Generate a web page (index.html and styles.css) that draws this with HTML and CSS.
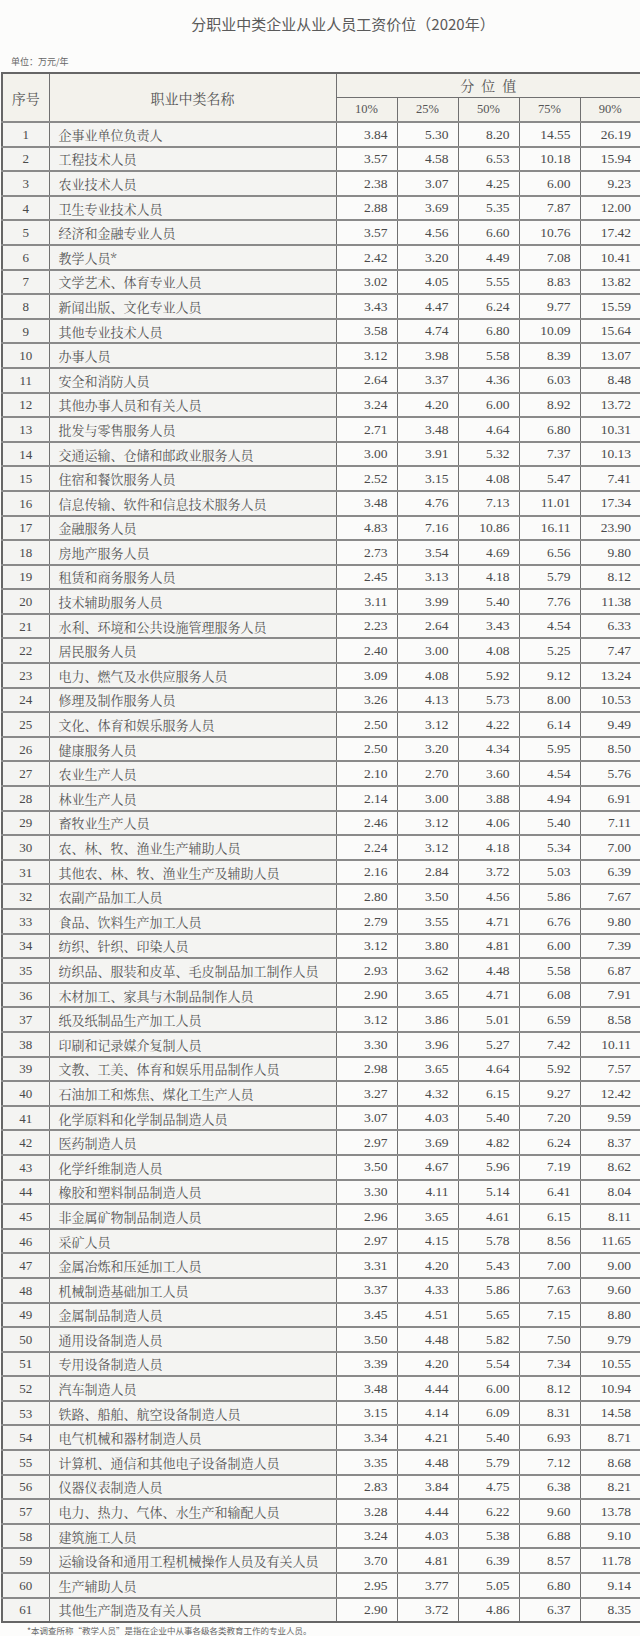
FILE: index.html
```html
<!DOCTYPE html>
<html lang="zh-CN">
<head>
<meta charset="utf-8">
<title>分职业中类企业从业人员工资价位（2020年）</title>
<link rel="stylesheet" href="styles.css">
</head>
<body>
<div class="page">
<h1 class="title">分职业中类企业从业人员工资价位（2020年）</h1>
<div class="unit">单位：万元/年</div>
<table class="wage">
<colgroup>
<col class="c-no"><col class="c-name"><col class="c-v"><col class="c-v"><col class="c-v"><col class="c-v"><col class="c-v">
</colgroup>
<thead>
<tr class="h1"><th rowspan="2" class="hd-big">序号</th><th rowspan="2" class="hd-big">职业中类名称</th><th colspan="5" class="hd-group">分位值</th></tr>
<tr class="h2"><th class="pct">10%</th><th class="pct">25%</th><th class="pct">50%</th><th class="pct">75%</th><th class="pct">90%</th></tr>
</thead>
<tbody>
<tr><td>1</td><td>企事业单位负责人</td><td>3.84</td><td>5.30</td><td>8.20</td><td>14.55</td><td>26.19</td></tr>
<tr><td>2</td><td>工程技术人员</td><td>3.57</td><td>4.58</td><td>6.53</td><td>10.18</td><td>15.94</td></tr>
<tr><td>3</td><td>农业技术人员</td><td>2.38</td><td>3.07</td><td>4.25</td><td>6.00</td><td>9.23</td></tr>
<tr><td>4</td><td>卫生专业技术人员</td><td>2.88</td><td>3.69</td><td>5.35</td><td>7.87</td><td>12.00</td></tr>
<tr><td>5</td><td>经济和金融专业人员</td><td>3.57</td><td>4.56</td><td>6.60</td><td>10.76</td><td>17.42</td></tr>
<tr><td>6</td><td>教学人员*</td><td>2.42</td><td>3.20</td><td>4.49</td><td>7.08</td><td>10.41</td></tr>
<tr><td>7</td><td>文学艺术、体育专业人员</td><td>3.02</td><td>4.05</td><td>5.55</td><td>8.83</td><td>13.82</td></tr>
<tr><td>8</td><td>新闻出版、文化专业人员</td><td>3.43</td><td>4.47</td><td>6.24</td><td>9.77</td><td>15.59</td></tr>
<tr><td>9</td><td>其他专业技术人员</td><td>3.58</td><td>4.74</td><td>6.80</td><td>10.09</td><td>15.64</td></tr>
<tr><td>10</td><td>办事人员</td><td>3.12</td><td>3.98</td><td>5.58</td><td>8.39</td><td>13.07</td></tr>
<tr><td>11</td><td>安全和消防人员</td><td>2.64</td><td>3.37</td><td>4.36</td><td>6.03</td><td>8.48</td></tr>
<tr><td>12</td><td>其他办事人员和有关人员</td><td>3.24</td><td>4.20</td><td>6.00</td><td>8.92</td><td>13.72</td></tr>
<tr><td>13</td><td>批发与零售服务人员</td><td>2.71</td><td>3.48</td><td>4.64</td><td>6.80</td><td>10.31</td></tr>
<tr><td>14</td><td>交通运输、仓储和邮政业服务人员</td><td>3.00</td><td>3.91</td><td>5.32</td><td>7.37</td><td>10.13</td></tr>
<tr><td>15</td><td>住宿和餐饮服务人员</td><td>2.52</td><td>3.15</td><td>4.08</td><td>5.47</td><td>7.41</td></tr>
<tr><td>16</td><td>信息传输、软件和信息技术服务人员</td><td>3.48</td><td>4.76</td><td>7.13</td><td>11.01</td><td>17.34</td></tr>
<tr><td>17</td><td>金融服务人员</td><td>4.83</td><td>7.16</td><td>10.86</td><td>16.11</td><td>23.90</td></tr>
<tr><td>18</td><td>房地产服务人员</td><td>2.73</td><td>3.54</td><td>4.69</td><td>6.56</td><td>9.80</td></tr>
<tr><td>19</td><td>租赁和商务服务人员</td><td>2.45</td><td>3.13</td><td>4.18</td><td>5.79</td><td>8.12</td></tr>
<tr><td>20</td><td>技术辅助服务人员</td><td>3.11</td><td>3.99</td><td>5.40</td><td>7.76</td><td>11.38</td></tr>
<tr><td>21</td><td>水利、环境和公共设施管理服务人员</td><td>2.23</td><td>2.64</td><td>3.43</td><td>4.54</td><td>6.33</td></tr>
<tr><td>22</td><td>居民服务人员</td><td>2.40</td><td>3.00</td><td>4.08</td><td>5.25</td><td>7.47</td></tr>
<tr><td>23</td><td>电力、燃气及水供应服务人员</td><td>3.09</td><td>4.08</td><td>5.92</td><td>9.12</td><td>13.24</td></tr>
<tr><td>24</td><td>修理及制作服务人员</td><td>3.26</td><td>4.13</td><td>5.73</td><td>8.00</td><td>10.53</td></tr>
<tr><td>25</td><td>文化、体育和娱乐服务人员</td><td>2.50</td><td>3.12</td><td>4.22</td><td>6.14</td><td>9.49</td></tr>
<tr><td>26</td><td>健康服务人员</td><td>2.50</td><td>3.20</td><td>4.34</td><td>5.95</td><td>8.50</td></tr>
<tr><td>27</td><td>农业生产人员</td><td>2.10</td><td>2.70</td><td>3.60</td><td>4.54</td><td>5.76</td></tr>
<tr><td>28</td><td>林业生产人员</td><td>2.14</td><td>3.00</td><td>3.88</td><td>4.94</td><td>6.91</td></tr>
<tr><td>29</td><td>畜牧业生产人员</td><td>2.46</td><td>3.12</td><td>4.06</td><td>5.40</td><td>7.11</td></tr>
<tr><td>30</td><td>农、林、牧、渔业生产辅助人员</td><td>2.24</td><td>3.12</td><td>4.18</td><td>5.34</td><td>7.00</td></tr>
<tr><td>31</td><td>其他农、林、牧、渔业生产及辅助人员</td><td>2.16</td><td>2.84</td><td>3.72</td><td>5.03</td><td>6.39</td></tr>
<tr><td>32</td><td>农副产品加工人员</td><td>2.80</td><td>3.50</td><td>4.56</td><td>5.86</td><td>7.67</td></tr>
<tr><td>33</td><td>食品、饮料生产加工人员</td><td>2.79</td><td>3.55</td><td>4.71</td><td>6.76</td><td>9.80</td></tr>
<tr><td>34</td><td>纺织、针织、印染人员</td><td>3.12</td><td>3.80</td><td>4.81</td><td>6.00</td><td>7.39</td></tr>
<tr><td>35</td><td>纺织品、服装和皮革、毛皮制品加工制作人员</td><td>2.93</td><td>3.62</td><td>4.48</td><td>5.58</td><td>6.87</td></tr>
<tr><td>36</td><td>木材加工、家具与木制品制作人员</td><td>2.90</td><td>3.65</td><td>4.71</td><td>6.08</td><td>7.91</td></tr>
<tr><td>37</td><td>纸及纸制品生产加工人员</td><td>3.12</td><td>3.86</td><td>5.01</td><td>6.59</td><td>8.58</td></tr>
<tr><td>38</td><td>印刷和记录媒介复制人员</td><td>3.30</td><td>3.96</td><td>5.27</td><td>7.42</td><td>10.11</td></tr>
<tr><td>39</td><td>文教、工美、体育和娱乐用品制作人员</td><td>2.98</td><td>3.65</td><td>4.64</td><td>5.92</td><td>7.57</td></tr>
<tr><td>40</td><td>石油加工和炼焦、煤化工生产人员</td><td>3.27</td><td>4.32</td><td>6.15</td><td>9.27</td><td>12.42</td></tr>
<tr><td>41</td><td>化学原料和化学制品制造人员</td><td>3.07</td><td>4.03</td><td>5.40</td><td>7.20</td><td>9.59</td></tr>
<tr><td>42</td><td>医药制造人员</td><td>2.97</td><td>3.69</td><td>4.82</td><td>6.24</td><td>8.37</td></tr>
<tr><td>43</td><td>化学纤维制造人员</td><td>3.50</td><td>4.67</td><td>5.96</td><td>7.19</td><td>8.62</td></tr>
<tr><td>44</td><td>橡胶和塑料制品制造人员</td><td>3.30</td><td>4.11</td><td>5.14</td><td>6.41</td><td>8.04</td></tr>
<tr><td>45</td><td>非金属矿物制品制造人员</td><td>2.96</td><td>3.65</td><td>4.61</td><td>6.15</td><td>8.11</td></tr>
<tr><td>46</td><td>采矿人员</td><td>2.97</td><td>4.15</td><td>5.78</td><td>8.56</td><td>11.65</td></tr>
<tr><td>47</td><td>金属冶炼和压延加工人员</td><td>3.31</td><td>4.20</td><td>5.43</td><td>7.00</td><td>9.00</td></tr>
<tr><td>48</td><td>机械制造基础加工人员</td><td>3.37</td><td>4.33</td><td>5.86</td><td>7.63</td><td>9.60</td></tr>
<tr><td>49</td><td>金属制品制造人员</td><td>3.45</td><td>4.51</td><td>5.65</td><td>7.15</td><td>8.80</td></tr>
<tr><td>50</td><td>通用设备制造人员</td><td>3.50</td><td>4.48</td><td>5.82</td><td>7.50</td><td>9.79</td></tr>
<tr><td>51</td><td>专用设备制造人员</td><td>3.39</td><td>4.20</td><td>5.54</td><td>7.34</td><td>10.55</td></tr>
<tr><td>52</td><td>汽车制造人员</td><td>3.48</td><td>4.44</td><td>6.00</td><td>8.12</td><td>10.94</td></tr>
<tr><td>53</td><td>铁路、船舶、航空设备制造人员</td><td>3.15</td><td>4.14</td><td>6.09</td><td>8.31</td><td>14.58</td></tr>
<tr><td>54</td><td>电气机械和器材制造人员</td><td>3.34</td><td>4.21</td><td>5.40</td><td>6.93</td><td>8.71</td></tr>
<tr><td>55</td><td>计算机、通信和其他电子设备制造人员</td><td>3.35</td><td>4.48</td><td>5.79</td><td>7.12</td><td>8.68</td></tr>
<tr><td>56</td><td>仪器仪表制造人员</td><td>2.83</td><td>3.84</td><td>4.75</td><td>6.38</td><td>8.21</td></tr>
<tr><td>57</td><td>电力、热力、气体、水生产和输配人员</td><td>3.28</td><td>4.44</td><td>6.22</td><td>9.60</td><td>13.78</td></tr>
<tr><td>58</td><td>建筑施工人员</td><td>3.24</td><td>4.03</td><td>5.38</td><td>6.88</td><td>9.10</td></tr>
<tr><td>59</td><td>运输设备和通用工程机械操作人员及有关人员</td><td>3.70</td><td>4.81</td><td>6.39</td><td>8.57</td><td>11.78</td></tr>
<tr><td>60</td><td>生产辅助人员</td><td>2.95</td><td>3.77</td><td>5.05</td><td>6.80</td><td>9.14</td></tr>
<tr><td>61</td><td>其他生产制造及有关人员</td><td>2.90</td><td>3.72</td><td>4.86</td><td>6.37</td><td>8.35</td></tr>
</tbody>
</table>
<p class="note">*本调查所称“教学人员”是指在企业中从事各级各类教育工作的专业人员。</p>
</div>
</body>
</html>
```
FILE: styles.css
```css
html, body {
  margin: 0;
  padding: 0;
  background: #fcfcfb;
}

.page {
  width: 640px;
  font-family: "Noto Sans CJK SC", "Liberation Sans", sans-serif;
  color: #555;
}

.title {
  margin: 0;
  height: 47px;
  line-height: 47px;
  padding-left: 46px;
  text-align: center;
  font-size: 15px;
  font-weight: 400;
  color: #5a5a5a;
}

.unit {
  box-sizing: border-box;
  height: 25px;
  padding: 9px 0 0 11px;
  line-height: 12px;
  font-size: 9px;
  color: #666;
}

.wage {
  margin-left: 1px;
  width: 637px;
  table-layout: fixed;
  border-collapse: collapse;
  border: 2px solid #666;
  font-family: "Liberation Serif", "Noto Serif CJK SC", "Noto Sans CJK SC", serif;
}

.c-no { width: 47px; }
.c-name { width: 287px; }
.c-v { width: 61px; }

.wage th,
.wage td {
  border: 1px solid #707070;
  padding: 0;
  line-height: 1;
  overflow: hidden;
  white-space: nowrap;
}

.wage thead th {
  background: #f3f2ec;
  font-weight: 400;
  color: #555;
}

.h1 { height: 24px; }
.h2 { height: 25px; }

.hd-big {
  font-family: "Noto Serif CJK SC", "Noto Sans CJK SC", serif;
  font-size: 14px;
}

.hd-group {
  font-family: "Noto Serif CJK SC", "Noto Sans CJK SC", serif;
  font-size: 14px;
  letter-spacing: 7px;
  text-indent: 7px;
}

.pct {
  font-size: 12.5px;
}

.wage tbody tr {
  height: 24.6px;
}

.wage tbody td {
  background: #fbfbfa;
  text-align: right;
  padding-right: 9px;
  font-size: 13.5px;
  color: #4a4a4a;
  border-top: 2px solid #8a8a8a;
}

.wage tbody td:nth-child(1) {
  background: #f4f4f2;
  text-align: center;
  padding-right: 0;
  font-size: 13px;
}

.wage tbody td:nth-child(2) {
  background: #f4f4f2;
  text-align: left;
  padding-left: 9px;
  padding-right: 0;
  font-family: "Noto Serif CJK SC", "Noto Sans CJK SC", serif;
  font-size: 13px;
  color: #555;
}

.note {
  margin: 0;
  padding-left: 27px;
  height: 14px;
  line-height: 14px;
  font-size: 8.5px;
  color: #666;
}
```
